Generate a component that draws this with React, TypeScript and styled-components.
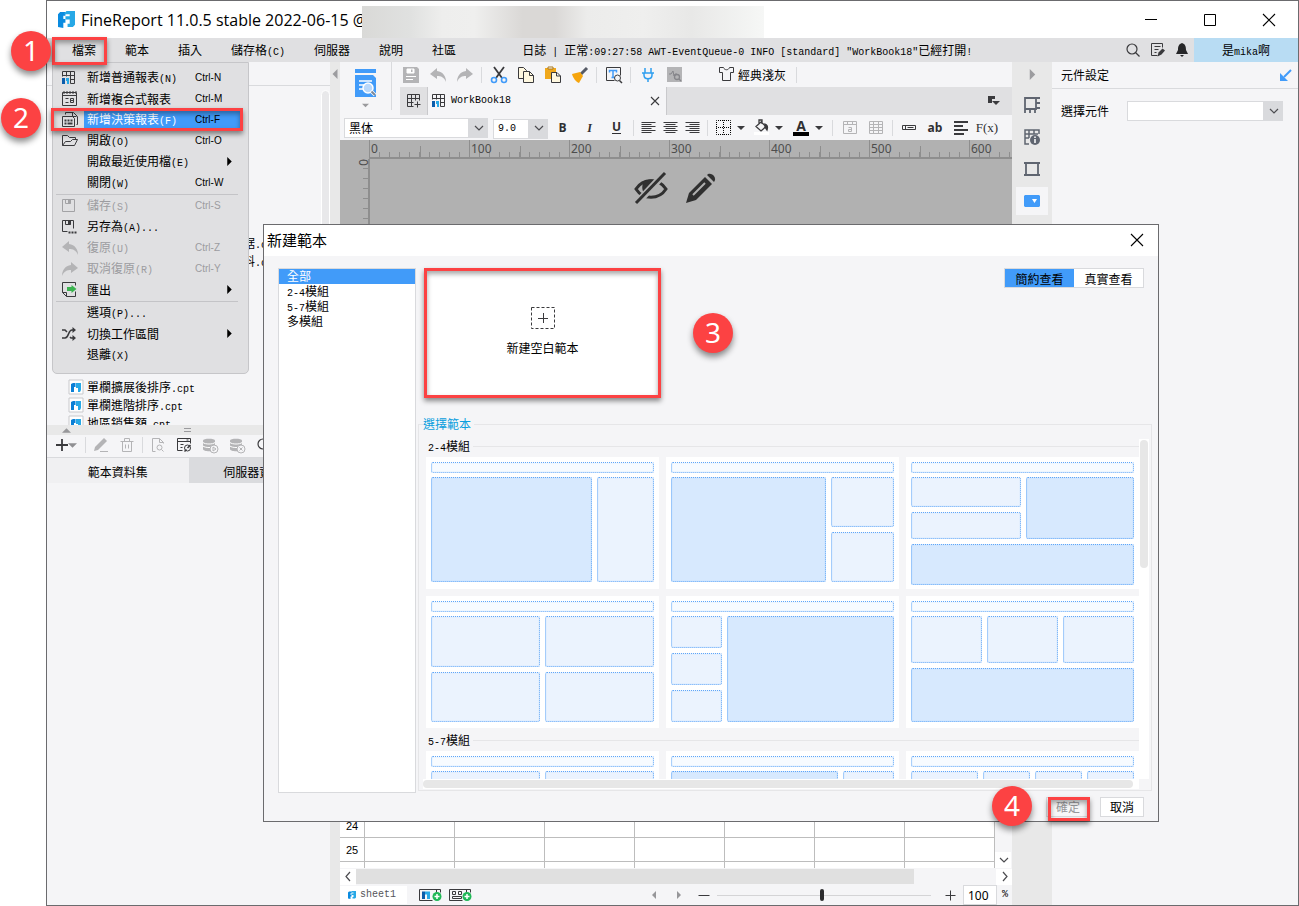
import React from "react";
import styled, { createGlobalStyle, css } from "styled-components";

const CJK = '"Noto Sans CJK TC", sans-serif';
const MONO = '"Liberation Mono", "Noto Sans CJK TC", monospace';
const blue = "#419bf9";
const panel = "#f5f5f7";
const bar = "#e0e0e2";
const line = "#d9dadd";
const ink = "#3a3a3d";
const faint = "#b4b4b6";

const Global = createGlobalStyle`
  * { box-sizing: border-box; }
  body { margin: 0; background: #fff; color: #000; font: 12px/16px ${CJK}; }
  button, input, select { font: inherit; color: inherit; margin: 0; padding: 0; border: 0; background: none; border-radius: 0; outline: none; }
  ul { list-style: none; margin: 0; padding: 0; }
  svg { display: block; flex: none; overflow: visible; }
`;

/* ---------- shared parts ---------- */

const Lat = styled.span`
  font: 10px/12px ${MONO};
  white-space: pre;
`;

const Mixed = ({ text }: { text: string }) => (
  <>
    {text.split(/([\x20-\x7e]+)/).map((part, i) =>
      /^[\x20-\x7e]+$/.test(part) ? <Lat key={i}>{part}</Lat> : part
    )}
  </>
);

const Badge = styled.span<{ $x: number; $y: number }>`
  position: absolute;
  left: ${(p) => p.$x}px;
  top: ${(p) => p.$y}px;
  z-index: 5;
  width: 40px;
  height: 40px;
  border-radius: 50%;
  background: #fc4243;
  color: #fff;
  font: 28px/38px "Noto Sans", sans-serif;
  text-align: center;
  box-shadow: 0 4px 6px rgba(0, 0, 0, 0.45);
  pointer-events: none;
`;

const Frame = styled.span<{ $inset: string }>`
  position: absolute;
  inset: ${(p) => p.$inset};
  z-index: 4;
  border: 3px solid #fc4243;
  box-shadow: 0 3px 5px rgba(0, 0, 0, 0.45), inset 0 3px 5px rgba(0, 0, 0, 0.35);
  pointer-events: none;
`;

type IconProps = {
  size?: number;
  w?: number;
  h?: number;
  color?: string;
  crisp?: boolean;
  children: React.ReactNode;
};

/* crisp icons centre their one-pixel strokes on the pixel grid */
const Icon = ({ size = 16, w = size, h = size, color = ink, crisp, children }: IconProps) => (
  <svg
    width={w}
    height={h}
    viewBox={crisp ? `-0.5 -0.5 ${w} ${h}` : `0 0 ${w} ${h}`}
    fill="none"
    stroke={color}
    strokeWidth={crisp ? 1 : 1.3}
    aria-hidden="true"
  >
    {children}
  </svg>
);

/* ---------- icons ---------- */

const Logo = ({ size = 16 }: { size?: number }) => (
  <svg width={size} height={size} viewBox="0 0 16 16" aria-hidden="true">
    <path d="M0 3 2 1H7V4.500H5V7.500H7V11H5V16L0 15Z" fill="#0a8be0" />
    <path d="M6 2 8 0H16V13L14 15H9V12H11V8H7V5H11V3H6Z" fill="#27a8e6" />
  </svg>
);
const GridReport = () => (
  <Icon size={14} crisp>
    <path d="M0 5V0H12V12H8M0 4H12M4 0V5M8 0V12M8 8H12" />
    <path d="M-0.500 6.500H2.500V12.500H-0.500Z" fill="#0b5cab" stroke="none" />
    <path d="M3.500 6.500H6.500V12.500H4.500V9.500H3.500Z" fill="#27a8e6" stroke="none" />
  </Icon>
);
const GridPlus = () => (
  <Icon size={14} crisp>
    <path d="M6 12H0V0H12V6M0 4H12M0 8H6M4 0V12M8 0V6M10 7V13M7 10H13" />
  </Icon>
);
const MultiReport = () => (
  <Icon size={15} crisp>
    <path d="M0 1H14V14H0ZM0 4H14M3 7H6M3 11H6M8 7H11V9H8ZM8 9H11V11H8Z" />
    <path d="M1 0H14M1 2H14" strokeDasharray="1 2" />
  </Icon>
);
const Dashboard = () => (
  <Icon size={16} crisp>
    <path d="M3 2V0H11L15 4V12H14M10 0V4H14M0 4H10L12 6V14H0Z" />
    <path d="M2 8H4M5 8H7M8 8H10M2 11H4M5 11H10" strokeWidth="2" />
  </Icon>
);
const Folder = () => (
  <Icon size={16} crisp>
    <path d="M0 12V2H5L7 4H13V6M0 12 3 8 8 8 10 6H15L12 12Z" />
  </Icon>
);
const Floppy = ({ color = ink, dots = false }: { color?: string; dots?: boolean }) => (
  <Icon size={14} color={color} crisp>
    <path d={dots ? "M5 11H0V0H11V8" : "M0 0H12V12H0Z"} />
    <path d="M3 0V4H8V0" />
    <path d="M5.500 0H8.500V4H5.500Z" fill={color} stroke="none" />
    {dots && <path d="M6 12H8M9 12H11M12 12H14" strokeWidth="2" />}
  </Icon>
);
const Undo = () => (
  <Icon size={16}>
    <path d="M7 1 0 7 7 12V9C11 9 14 10 16 15 16 9 13 5 7 4Z" fill={faint} stroke="none" />
  </Icon>
);
const Redo = () => (
  <Icon size={16}>
    <path d="M9 1 16 7 9 12V9C5 9 2 10 0 15 0 9 3 5 9 4Z" fill={faint} stroke="none" />
  </Icon>
);
const Export = () => (
  <Icon size={15} crisp>
    <path d="M0 10V0H13V3M13 9V14H4L0 10H4V14" />
    <path d="M4.500 4.500H9V2.500L14 6.500 9 10.500V8.500H4.500Z" fill="#3bb34f" stroke="none" />
  </Icon>
);
const Shuffle = () => (
  <Icon size={14}>
    <path d="M0 3H3L5 5M8 10 9 11H12M0 11H3C7 11 6 3 10 3H12" strokeWidth="1.600" />
    <path d="M10.500 0 14 3 10.500 6ZM10.500 8 14 11 10.500 14Z" fill={ink} stroke="none" />
  </Icon>
);
const SaveAll = () => (
  <Icon size={16}>
    <path d="M0 0H14L16 2V16H0Z" fill={faint} stroke="none" />
    <path d="M4 2H11V6H4ZM3 9.500H13M3 12.500H10" stroke="#fff" fill="#fff" strokeWidth="1" />
    <path d="M8 2.500H9.500V5H8Z" fill={faint} stroke="none" />
  </Icon>
);
const Scissors = () => (
  <Icon size={16}>
    <path d="M3 0 11 11M13 0 5 11" strokeWidth="1.800" />
    <circle cx="3" cy="13" r="2.500" stroke={blue} strokeWidth="1.600" />
    <circle cx="13" cy="13" r="2.500" stroke={blue} strokeWidth="1.600" />
  </Icon>
);
const Copy = () => (
  <Icon size={16} crisp>
    <path d="M0 0H5L8 3V11H0Z" fill="#fff8e0" />
    <path d="M5 4H11L15 8V15H5Z" fill="#fff8e0" />
    <path d="M11 4V8H15" />
  </Icon>
);
const Paste = () => (
  <Icon size={16}>
    <path d="M0 1H11V12H0Z" fill="#f0a81c" stroke="none" />
    <path d="M3 0H8V2H3Z" fill="#fff" stroke="#a8761a" strokeWidth="1" />
    <path d="M6.500 5.500H12L15.500 9V15.500H6.500ZM11.500 5.500V9H15.500" fill="#fff8e0" strokeWidth="1" />
  </Icon>
);
const Brush = () => (
  <Icon size={16}>
    <path d="M15 1 9 7" stroke="#565a66" strokeWidth="3" />
    <path d="M0 7 8 5 11 9 7 16C4 15 1 11 0 7Z" fill="#f6a50d" stroke="none" />
  </Icon>
);
const TextSearch = () => (
  <Icon size={16} crisp>
    <path d="M8 13H0V0H14V8" />
    <path d="M3 5V3H10V5M6.500 3V10M5 10H8" stroke={blue} strokeWidth="1.500" />
    <circle cx="11" cy="10.500" r="3" fill={panel} />
    <path d="M13 13 15.500 15.500" strokeWidth="1.500" />
  </Icon>
);
const Plug = () => (
  <Icon size={14} color="#2f9ff0">
    <path d="M4 0V5M10 0V5M1 5H13M3 5V7C3 12 11 12 11 7V5M7 11V14" strokeWidth="1.500" />
  </Icon>
);
const ChartSearch = () => (
  <Icon size={15}>
    <path d="M0 0H15V15H0Z" fill={faint} stroke="none" />
    <path d="M2 7H4L6 4 7 9 8 7H10" stroke="#85858a" strokeWidth="1" />
    <circle cx="10" cy="10" r="2.500" stroke="#85858a" />
    <path d="M12 12 14 14" stroke="#85858a" />
  </Icon>
);
const Shirt = () => (
  <Icon size={15} crisp>
    <path d="M4 0H0V5H3V13H11V5H14V0H10C9 3 5 3 4 0Z" />
  </Icon>
);
const Lens = ({ size = 14 }: { size?: number }) => (
  <Icon size={size}>
    <circle cx="6" cy="6" r="5" strokeWidth="1.200" />
    <path d="M9.500 9.500 13.500 13.500" strokeWidth="1.200" />
  </Icon>
);
const NotePen = () => (
  <Icon size={14} crisp>
    <path d="M11 4V0H0V12H6M3 3H9M3 6H7M3 9H5" />
    <path d="M6 13 7 9 11 5 13.500 7 10 11Z" fill={ink} stroke="none" />
  </Icon>
);
const Bell = () => (
  <Icon w={12} h={14}>
    <path d="M6 0C9 1 10 3 10 7L12 11H0L2 7C2 3 3 1 6 0ZM4 12H8L6 14Z" fill="#262628" stroke="none" />
  </Icon>
);
const Caret = ({ dir = "down", size = 7, color = ink }: { dir?: "down" | "up" | "left" | "right"; size?: number; color?: string }) => {
  const paths = { down: "M0 2H8L4 6Z", up: "M0 6H8L4 2Z", left: "M6 0V8L2 4Z", right: "M2 0V8L6 4Z" };
  return (
    <svg width={size} height={size} viewBox="0 0 8 8" aria-hidden="true">
      <path d={paths[dir]} fill={color} />
    </svg>
  );
};
const Chevron = ({ d = "M1 2 5 6 9 2" }: { d?: string }) => (
  <Icon size={9} color="#4c4c50">
    <path d={d} strokeWidth="1.200" />
  </Icon>
);
const Cross = ({ size = 12, color = "#000" }: { size?: number; color?: string }) => (
  <Icon size={size} color={color}>
    <path d={`M0 0 ${size} ${size}M${size} 0 0 ${size}`} strokeWidth="1.100" />
  </Icon>
);
const Lines = ({ ends }: { ends: [number, number][] }) => (
  <Icon w={14} h={11} crisp>
    {ends.map(([a, b], i) => (
      <path key={i} d={`M${a} ${i * 2}H${b}`} />
    ))}
  </Icon>
);
const BigPreview = () => (
  <Icon w={21} h={28}>
    <path d="M0 0H21V4H0ZM0 6H18L21 9V28H0Z" fill={blue} stroke="none" />
    <path d="M4 12H17M4 16H9M4 20H8" stroke="#fff" strokeWidth="1.600" />
    <circle cx="13" cy="19" r="5" fill="#b9d8fb" stroke="#fff" strokeWidth="1.500" />
    <path d="M16.500 22.500 20 26" stroke="#fff" strokeWidth="3.500" />
    <path d="M16.500 22.500 20 26" stroke="#7d8796" strokeWidth="2" />
  </Icon>
);
const FileMark = () => (
  <Icon size={14}>
    <path d="M0 0H14V14H0Z" fill="#fff" stroke="#c9c9cc" strokeWidth="1" />
    <path d="M2 4 4 3H6.500V7H5V12H2Z" fill="#0a7fd6" stroke="none" />
    <path d="M7 3H12V10L11 12H9V8H7Z" fill="#27a8e6" stroke="none" />
  </Icon>
);
const Database = ({ mark }: { mark: string }) => (
  <Icon size={15} color={faint}>
    <path d="M0 2.500C0 0 12 0 12 2.500V11C12 14 0 14 0 11Z" fill={faint} stroke="none" />
    <path d="M0 4.500C2 6.500 10 6.500 12 4.500M0 8C2 10 10 10 12 8" stroke="#fff" strokeWidth="1" />
    <circle cx="11" cy="11" r="4" fill={panel} strokeWidth="1" />
    <path d={mark} strokeWidth="1" />
  </Icon>
);

/* ---------- window frame ---------- */

const Page = styled.div`
  padding-left: 46px;
  min-height: 100vh;
  display: flex;
`;
const Window = styled.div`
  position: relative;
  flex: 1;
  min-width: 0;
  display: flex;
  flex-direction: column;
  border: 1px solid #6b6b6e;
  background: ${panel};
`;
const TitleBar = styled.header`
  height: 37px;
  display: flex;
  align-items: center;
  background: #fff;
  padding-left: 11px;
`;
const Title = styled.h1`
  margin: 0 0 0 6px;
  font: 16px/20px "Open Sans", sans-serif;
  white-space: nowrap;
  width: 281px;
`;
const Masked = styled.div`
  width: 402px;
  height: 32px;
  margin-top: 5px;
  z-index: 1;
  background: linear-gradient(90deg, #d9d9d7, #e0e1e0 12%, #eeeeed 20%, #efefee 28%, #dad8d6 40%, #dad8d6 48%, #ececeb 56%, #efefee 70%, #e8e8e7 82%, #f6f7f6);
`;
const WindowButton = styled.button`
  width: 59px;
  height: 36px;
  display: flex;
  align-items: center;
  justify-content: center;
`;
const Spacer = styled.div`
  flex: 1;
`;

/* ---------- menu bar ---------- */

const MenuBar = styled.nav`
  position: relative;
  z-index: 3;
  height: 24px;
  display: flex;
  align-items: center;
  background: ${bar};
  padding-left: 11px;
`;
const MenuTitle = styled.button`
  position: relative;
  height: 24px;
  padding: 0 14px;
  margin-right: 1px;
  line-height: 22px;
  white-space: nowrap;
`;
const LogLine = styled.p`
  margin: 0 0 0 51px;
  white-space: pre;
`;
const Tools = styled.div`
  display: flex;
  align-items: center;
  gap: 11px;
  margin-right: 6px;
`;
const PlainButton = styled.button`
  display: flex;
  align-items: center;
  justify-content: center;
`;
const User = styled.button`
  width: 104px;
  height: 24px;
  background: #b8dcf3;
`;
const Dropdown = styled.div`
  position: absolute;
  left: 5px;
  top: 24px;
  width: 197px;
  padding: 4px 8px 8px 9px;
  background: ${bar};
  border: 1px solid #c6c6c9;
  border-radius: 0 0 5px 5px;
`;
const MenuRow = styled.button<{ $off?: boolean }>`
  position: relative;
  width: 100%;
  height: 21px;
  display: flex;
  align-items: center;
  text-align: left;
  white-space: nowrap;
  ${(p) => p.$off && css`color: #9c9ca0;`}
`;
const RowIcon = styled.span`
  width: 22px;
  display: flex;
`;
const RowLabel = styled.span<{ $on?: boolean }>`
  flex: 1;
  height: 17px;
  padding-left: 3px;
  display: flex;
  align-items: center;
  ${(p) => p.$on && css`background: ${blue};`}
`;
const RowName = styled.span<{ $on?: boolean }>`
  width: 108px;
  ${(p) => p.$on && css`color: #fff;`}
`;
const Shortcut = styled.span`
  width: 30px;
  font: 10px/12px "Liberation Sans", sans-serif;
`;
const MenuRule = styled.div`
  height: 1px;
  margin: 1px 2px 0 -6px;
  background: #c4c4c7;
`;

type Entry = { name: string; key?: string; icon?: React.ReactNode; off?: boolean; on?: boolean; sub?: boolean };
const fileMenu: Entry[][] = [
  [
    { name: "新增普通報表(N)", key: "Ctrl-N", icon: <GridReport /> },
    { name: "新增複合式報表", key: "Ctrl-M", icon: <MultiReport /> },
    { name: "新增決策報表(F)", key: "Ctrl-F", icon: <Dashboard />, on: true },
    { name: "開啟(O)", key: "Ctrl-O", icon: <Folder /> },
    { name: "開啟最近使用檔(E)", sub: true },
    { name: "關閉(W)", key: "Ctrl-W" },
  ],
  [
    { name: "儲存(S)", key: "Ctrl-S", icon: <Floppy color="#a2a2a5" />, off: true },
    { name: "另存為(A)...", icon: <Floppy dots /> },
    { name: "復原(U)", key: "Ctrl-Z", icon: <Undo />, off: true },
    { name: "取消復原(R)", key: "Ctrl-Y", icon: <Redo />, off: true },
    { name: "匯出", icon: <Export />, sub: true },
  ],
  [{ name: "選項(P)..." }, { name: "切換工作區間", icon: <Shuffle />, sub: true }, { name: "退離(X)" }],
];

const FileMenu = () => (
  <Dropdown>
    {fileMenu.map((group, g) => (
      <React.Fragment key={g}>
        {g > 0 && <MenuRule />}
        {group.map((e) => (
          <MenuRow key={e.name} $off={e.off}>
            <RowIcon>{e.icon}</RowIcon>
            <RowLabel $on={e.on}>
              <RowName $on={e.on}>
                <Mixed text={e.name} />
              </RowName>
              <Shortcut>{e.key}</Shortcut>
              {e.sub && <Caret dir="right" size={9} color="#000" />}
            </RowLabel>
            {e.on && (
              <>
                <Frame $inset="-1px -3px -1px -11px" />
                <Badge $x={-61} $y={-11}>2</Badge>
              </>
            )}
          </MenuRow>
        ))}
      </React.Fragment>
    ))}
  </Dropdown>
);

/* ---------- left pane ---------- */

const Body = styled.div`
  flex: 1;
  display: flex;
  min-height: 0;
`;
const LeftPane = styled.aside`
  width: 283px;
  flex: none;
`;
const PaneHead = styled.div`
  height: 24px;
  border-bottom: 1px solid ${line};
`;
const Tree = styled.div`
  height: 339px;
  overflow: hidden;
  display: flex;
  justify-content: space-between;
`;
const TreeList = styled.ul`
  padding-top: 4px;
`;
const TreeRow = styled.li<{ $indent: number }>`
  height: 18px;
  padding-left: ${(p) => p.$indent}px;
  display: flex;
  align-items: center;
  white-space: nowrap;
  gap: 4px;
`;
const TreeTrack = styled.div`
  width: 9px;
  margin-top: 4px;
  background: #e8e8ea;
  border: 1px solid #fff;
  border-radius: 5px 5px 0 0;
`;
const SplitBar = styled.div`
  height: 10px;
  display: flex;
  align-items: center;
  gap: 113px;
  padding-left: 15px;
  background: #e8e8e8;
`;
const SplitGrip = styled.div`
  width: 7px;
  height: 4px;
  border: solid #9a9a9d;
  border-width: 1px 0;
`;
const DataTools = styled.div`
  height: 23px;
  display: flex;
  align-items: center;
  gap: 12px;
  padding: 0 0 2px 9px;
  border-bottom: 1px solid ${line};
  overflow: hidden;
`;
const Rule = styled.span<{ $m?: number; $h?: number }>`
  width: 1px;
  height: ${(p) => p.$h ?? 16}px;
  margin: 0 ${(p) => p.$m ?? 0}px;
  background: ${line};
  flex: none;
`;
const DataTabs = styled.div`
  height: 25px;
  display: grid;
  grid-template-columns: 1fr 1fr;
`;
const DataTab = styled.button<{ $on?: boolean }>`
  padding-top: 2px;
  background: ${(p) => (p.$on ? "#f0f0f2" : "#dadbde")};
`;

const treeRows: { text: string; indent: number }[] = [
  ...Array.from({ length: 8 }, () => ({ text: "", indent: 0 })),
  { text: "据.cpt", indent: 196 },
  { text: "料.cpt", indent: 196 },
  ...Array.from({ length: 6 }, () => ({ text: "", indent: 0 })),
  { text: "單欄擴展後排序.cpt", indent: 22 },
  { text: "單欄進階排序.cpt", indent: 22 },
  { text: "地區銷售額.cpt", indent: 22 },
];

const Left = () => (
  <LeftPane>
    <PaneHead />
    <Tree>
      <TreeList>
        {treeRows.map((r, i) => (
          <TreeRow key={i} $indent={r.indent}>
            {r.indent === 22 && <FileMark />}
            <span>
              <Mixed text={r.text} />
            </span>
          </TreeRow>
        ))}
      </TreeList>
      <TreeTrack />
    </Tree>
    <SplitBar>
      <Caret dir="up" size={9} color="#97979a" />
      <SplitGrip />
    </SplitBar>
    <DataTools>
      <PlainButton aria-label="add">
        <Icon size={12}>
          <path d="M0 6H12M6 0V12" strokeWidth="1.800" />
        </Icon>
        <Caret size={9} color="#8f8f92" />
      </PlainButton>
      <Rule $m={-4} />
      <PlainButton aria-label="edit">
        <Icon size={14}>
          <path d="M0 13 1 9 10 0 13 3 4 12Z" fill={faint} stroke="none" />
          <path d="M6 13.500H14" stroke={faint} strokeWidth="1" />
        </Icon>
      </PlainButton>
      <PlainButton aria-label="delete">
        <Icon size={14} color={faint} crisp>
          <path d="M0 3H13M4 3V0H9V3M2 3V13H11V3M5 6V10M8 6V10" />
        </Icon>
      </PlainButton>
      <Rule $m={-4} />
      <PlainButton aria-label="preview">
        <Icon size={14} color={faint} crisp>
          <path d="M4 13H1V0H8L12 4V5M8 0V4H12" />
          <circle cx="8" cy="9" r="2.500" />
          <path d="M10 11 12 13" />
        </Icon>
      </PlainButton>
      <PlainButton aria-label="manage">
        <Icon size={14} crisp>
          <path d="M5 12H0V0H13V5M0 3H13M3 6H6M3 9H5M9 1.500H11" />
          <circle cx="10" cy="9.500" r="3" />
          <path d="M10 9.500 13 6.500M7 13 9 11" strokeWidth="1.500" />
        </Icon>
      </PlainButton>
      <PlainButton aria-label="run">
        <Database mark="M10 9 13 11 10 13Z" />
      </PlainButton>
      <PlainButton aria-label="clear">
        <Database mark="M9.500 9.500 12.500 12.500M12.500 9.500 9.500 12.500" />
      </PlainButton>
      <PlainButton aria-label="search">
        <Lens />
      </PlainButton>
    </DataTools>
    <DataTabs>
      <DataTab $on>範本資料集</DataTab>
      <DataTab>伺服器資料集</DataTab>
    </DataTabs>
  </LeftPane>
);

/* ---------- centre ---------- */

const Gutter = styled.div`
  width: 10px;
  flex: none;
  padding-top: 7px;
  background: #e8e8e8;
`;
const Center = styled.main`
  flex: 1;
  min-width: 0;
  display: flex;
  flex-direction: column;
`;
const TopTools = styled.div`
  display: flex;
  height: 53px;
`;
const PreviewSlot = styled.button`
  width: 51px;
  display: flex;
  flex-direction: column;
  align-items: center;
  padding-top: 7px;
  gap: 5px;
`;
const TopRight = styled.div`
  flex: 1;
  min-width: 0;
`;
const ToolRow = styled.div`
  height: 25px;
  padding-left: 5px;
  display: flex;
  align-items: center;
`;
const ToolButton = styled.button<{ $w?: number }>`
  width: ${(p) => p.$w ?? 27}px;
  height: 22px;
  flex: none;
  display: flex;
  align-items: center;
  justify-content: center;
  gap: 6px;
`;
const ThemeButton = styled.button`
  display: flex;
  align-items: center;
  gap: 4px;
  margin: 0 10px 0 31px;
`;
const TabRow = styled.div`
  height: 28px;
  margin-left: 8px;
  display: flex;
  align-items: center;
  background: ${bar};
`;
const DocTab = styled.div`
  width: 240px;
  height: 28px;
  padding: 0 7px 0 4px;
  display: flex;
  align-items: center;
  gap: 5px;
  background: ${panel};
  border: solid #c9c9cc;
  border-width: 0 1px;
`;
const FormatRow = styled.div`
  height: 25px;
  padding-left: 4px;
  display: flex;
  align-items: center;
`;
const ComboBox = styled.span<{ $w: number }>`
  position: relative;
  width: ${(p) => p.$w}px;
  height: 20px;
  flex: none;
  margin-right: 5px;
  svg {
    position: absolute;
    right: 5px;
    top: 6px;
    pointer-events: none;
  }
  & + button { margin-left: -4px; }
`;
const Select = styled.select<{ $mono?: boolean }>`
  appearance: none;
  width: 100%;
  height: 100%;
  padding-left: 4px;
  border: 1px solid ${line};
  background: linear-gradient(${line}, ${line}) right / 19px 100% no-repeat #fff;
  ${(p) => p.$mono && css`font: 10px/16px ${MONO};`}
`;
const Glyph = styled.span<{ $style?: "bold" | "italic" | "under" | "mark" }>`
  font: bold 12px/14px "Open Sans", sans-serif;
  color: #2f2f32;
  ${(p) => p.$style === "italic" && css`font: italic bold 12px/14px "Liberation Serif", serif;`}
  ${(p) => p.$style === "under" && css`border-bottom: 1px solid #2f2f32; line-height: 12px;`}
  ${(p) => p.$style === "mark" && css`border-bottom: 4px solid #000; line-height: 13px; font-size: 14px; padding: 0 3px;`}
`;
const Formula = styled.span`
  font: 13px/14px "Liberation Serif", serif;
  color: #2f2f32;
`;

const Canvas = styled.section`
  flex: 1;
  display: flex;
  flex-direction: column;
  background: #b1b1b1;
`;
const Ruler = styled.div`
  height: 19px;
  margin-left: 29px;
  display: flex;
  overflow: hidden;
  border-bottom: 2px solid #8e8e8e;
`;
const RulerMark = styled.span`
  flex: none;
  width: 100px;
  height: 17px;
  padding-left: 1px;
  color: #4d4d4d;
  font: 12px/17px "Noto Sans", sans-serif;
  background: linear-gradient(#8e8e8e, #8e8e8e) 50px 100% / 1px 11px no-repeat,
    repeating-linear-gradient(90deg, transparent 0 9px, #8e8e8e 9px 10px) 0 100% / 100% 5px no-repeat;
  border-left: 1px solid #8e8e8e;
`;
const Work = styled.div`
  flex: 1;
  display: flex;
`;
const SideRuler = styled.div`
  width: 12px;
  margin-left: 18px;
  border-right: 2px solid #8e8e8e;
  background: repeating-linear-gradient(180deg, transparent 0 9px, #8e8e8e 9px 10px) 100% 0 / 5px 100% no-repeat;
  color: #4d4d4d;
  font: 12px/10px "Noto Sans", sans-serif;
  writing-mode: vertical-rl;
`;
const WorkIcons = styled.div`
  flex: 1;
  display: flex;
  justify-content: center;
  gap: 18px;
  padding: 13px 30px 0 0;
`;
const SheetArea = styled.div`
  display: flex;
  height: 54px;
`;
const SheetClip = styled.div`
  flex: 1;
  min-width: 0;
  overflow: hidden;
  background: #fff;
`;
const SheetTable = styled.table`
  table-layout: fixed;
  width: 655px;
  border-collapse: separate;
  border-spacing: 0;
  th, td {
    width: 90px;
    height: 24px;
    padding: 0;
    border: solid #bdbdbd;
    border-width: 0 1px 1px 0;
    font: 11px/22px "Liberation Sans", sans-serif;
    text-align: center;
  }
  th { width: 25px; }
`;
const VTrack = styled.div`
  width: 17px;
  display: flex;
  flex-direction: column;
  justify-content: flex-end;
`;
const ArrowButton = styled.button`
  width: 16px;
  height: 16px;
  display: flex;
  align-items: center;
  justify-content: center;
  background: #fff;
  flex: none;
`;
const HTrack = styled.div`
  height: 17px;
  display: flex;
  align-items: center;
  justify-content: space-between;
  background: ${panel};
`;
const HThumb = styled.div`
  flex: 1;
  height: 15px;
  margin-right: 82px;
  background: #e0e0e0;
`;
const StatusRow = styled.div`
  height: 20px;
  display: flex;
  align-items: center;
`;
const SheetTab = styled.button`
  width: 67px;
  height: 18px;
  margin-right: 12px;
  display: flex;
  align-items: center;
  gap: 4px;
  padding-left: 8px;
  background: #fff;
  color: #55555a;
`;
const AddButtons = styled.div`
  display: flex;
  gap: 8px;
`;
const Range = styled.input`
  appearance: none;
  width: 214px;
  height: 14px;
  margin: 0 14px 0 1px;
  background: linear-gradient(#d4d4d6, #d4d4d6) center / 100% 1px no-repeat;
  &::-webkit-slider-thumb {
    appearance: none;
    width: 4px;
    height: 12px;
    border-radius: 2px;
    background: #2c2c2e;
  }
`;
const ZoomBox = styled.input`
  width: 34px;
  height: 20px;
  margin: 0 5px 0 7px;
  padding-left: 4px;
  border: 1px solid ${line};
  background: #fff;
  font: 12px/18px "Noto Sans", sans-serif;
`;
const Percent = styled(Lat)`
  margin-right: 4px;
`;

const AddSheet = ({ grid }: { grid?: boolean }) => (
  <Icon w={22} h={14} crisp>
    <path d="M13 12H0V1H21V4M17 1V4" />
    {grid ? (
      <path d="M3 3H6V6H3ZM9 3H12V6H9ZM3 8H12V10H3Z" />
    ) : (
      <>
        <path d="M2.500 3H5.500V10.500H2.500Z" fill="#0b5cab" stroke="none" />
        <path d="M5.500 3H10.500V10.500H7.500V6H5.500Z" fill="#27a8e6" stroke="none" />
      </>
    )}
    <circle cx="17.500" cy="8" r="4.500" fill="#1fb856" stroke="none" />
    <path d="M17.500 5.500V10.500M15 8H20" stroke="#fff" strokeWidth="1.500" />
  </Icon>
);

const Middle = () => (
  <Center>
    <TopTools>
      <PreviewSlot aria-label="preview report">
        <BigPreview />
        <Caret size={7} color="#9a9a9d" />
      </PreviewSlot>
      <Rule $h={48} />
      <TopRight>
        <ToolRow>
          <ToolButton aria-label="save"><SaveAll /></ToolButton>
          <ToolButton aria-label="undo"><Undo /></ToolButton>
          <ToolButton aria-label="redo"><Redo /></ToolButton>
          <Rule $m={3} />
          <ToolButton aria-label="cut"><Scissors /></ToolButton>
          <ToolButton aria-label="copy"><Copy /></ToolButton>
          <ToolButton aria-label="paste"><Paste /></ToolButton>
          <ToolButton aria-label="format"><Brush /></ToolButton>
          <Rule $m={3} />
          <ToolButton aria-label="find"><TextSearch /></ToolButton>
          <Rule $m={3} />
          <ToolButton aria-label="connect"><Plug /></ToolButton>
          <ToolButton aria-label="analyse"><ChartSearch /></ToolButton>
          <ThemeButton>
            <Shirt />
            經典淺灰
          </ThemeButton>
          <Rule />
        </ToolRow>
        <TabRow>
          <ToolButton aria-label="new sheet"><GridPlus /></ToolButton>
          <DocTab>
            <GridReport />
            <Lat>WorkBook18</Lat>
            <Spacer />
            <PlainButton aria-label="close tab"><Cross size={8} color={ink} /></PlainButton>
          </DocTab>
          <Spacer />
          <ToolButton $w={36} aria-label="tab list">
            <Icon size={12}>
              <path d="M0 1H7V4H4V8H0Z" fill={ink} stroke="none" />
              <path d="M4 6H12L8 10Z" fill={ink} stroke="none" />
            </Icon>
          </ToolButton>
        </TabRow>
      </TopRight>
    </TopTools>
    <FormatRow>
      <ComboBox $w={144}>
        <Select aria-label="font"><option>黑体</option></Select>
        <Chevron />
      </ComboBox>
      <ComboBox $w={55}>
        <Select $mono aria-label="font size"><option>9.0</option></Select>
        <Chevron />
      </ComboBox>
      <ToolButton><Glyph>B</Glyph></ToolButton>
      <ToolButton><Glyph $style="italic">I</Glyph></ToolButton>
      <ToolButton><Glyph $style="under">U</Glyph></ToolButton>
      <Rule $m={3} />
      <ToolButton $w={22} aria-label="left"><Lines ends={[[0, 14], [0, 10], [0, 14], [0, 10], [0, 14], [0, 10]]} /></ToolButton>
      <ToolButton $w={22} aria-label="center"><Lines ends={[[0, 14], [2, 12], [0, 14], [2, 12], [0, 14], [2, 12]]} /></ToolButton>
      <ToolButton $w={22} aria-label="right"><Lines ends={[[0, 14], [4, 14], [0, 14], [4, 14], [0, 14], [4, 14]]} /></ToolButton>
      <Rule $m={4} />
      <ToolButton $w={36} aria-label="borders">
        <Icon size={15} crisp>
          <path d="M0 0H14V14H0ZM7 0V14M0 7H14" stroke="#000" strokeDasharray="1 1" strokeDashoffset="0.500" />
        </Icon>
        <Caret size={8} />
      </ToolButton>
      <ToolButton $w={40} aria-label="fill">
        <Icon size={15}>
          <path d="M0 12H15V15H0Z" fill="#fff" stroke="none" />
          <path d="M5 4V0H8V4M2 6.500 7 2 12 6.500 7 11Z" />
          <path d="M11 4C14 5 14 7 13 10L11 7Z" fill={ink} />
        </Icon>
        <Caret size={8} />
      </ToolButton>
      <ToolButton $w={40} aria-label="text colour">
        <Glyph $style="mark">A</Glyph>
        <Caret size={8} />
      </ToolButton>
      <Rule $m={4} />
      <ToolButton $w={26} aria-label="merge">
        <Icon size={14} color={faint} crisp>
          <path d="M0 0H13V12H0ZM4 0V3M9 0V3M0 3H13" />
          <path d="M5 6H8V10H5V8H8" />
        </Icon>
      </ToolButton>
      <ToolButton $w={26} aria-label="cells">
        <Icon size={14} color={faint} crisp>
          <path d="M0 0H13V12H0ZM0 3H13M0 6H13M0 9H13M4 0V12M9 0V12" />
        </Icon>
      </ToolButton>
      <Rule $m={3} />
      <ToolButton $w={26} aria-label="widget">
        <Icon w={14} h={5} crisp><path d="M0 0H13V4H0ZM3 0V4M5 2H11" /></Icon>
      </ToolButton>
      <ToolButton $w={26}><Glyph>ab</Glyph></ToolButton>
      <ToolButton $w={26} aria-label="paragraph">
        <Icon size={14}><path d="M0 1H14M0 5H9M0 9H14M0 13H10" strokeWidth="1.800" /></Icon>
      </ToolButton>
      <ToolButton $w={26}><Formula>F(x)</Formula></ToolButton>
    </FormatRow>
    <Canvas>
      <Ruler>
        {[0, 100, 200, 300, 400, 500, 600].map((n) => (
          <RulerMark key={n}>{n}</RulerMark>
        ))}
      </Ruler>
      <Work>
        <SideRuler>0</SideRuler>
        <WorkIcons>
          <Icon size={32} color="#303030">
            <path d="M1 17C8 6 24 6 31 17 24 28 8 28 1 17Z" strokeWidth="3" />
            <path d="M9 9C13 7 19 7 23 9L11 24C7 20 6 14 9 9Z" fill="#303030" stroke="none" />
            <path d="M30 1 2 31" stroke="#b1b1b1" strokeWidth="7" />
            <path d="M30 1 1 31" strokeWidth="3" />
          </Icon>
          <Icon size={32} color="#303030">
            <path d="M1 31 4 21 20 5 27 12 11 28Z" fill="#303030" stroke="none" />
            <path d="M22 3C25-1 33 5 29 10Z" fill="#303030" stroke="none" />
            <path d="M8 23 20 11" stroke="#b1b1b1" strokeWidth="2" />
          </Icon>
        </WorkIcons>
      </Work>
    </Canvas>
    <SheetArea>
      <SheetClip>
        <SheetTable>
          <tbody>
            {["24", "25", ""].map((n) => (
              <tr key={n}>
                <th>{n}</th>
                {Array.from({ length: 7 }, (_, i) => <td key={i} />)}
              </tr>
            ))}
          </tbody>
        </SheetTable>
      </SheetClip>
      <VTrack>
        <ArrowButton aria-label="down"><Chevron /></ArrowButton>
      </VTrack>
    </SheetArea>
    <HTrack>
      <ArrowButton aria-label="left"><Chevron d="M6 0 2 4.500 6 9" /></ArrowButton>
      <HThumb />
      <ArrowButton aria-label="right"><Chevron d="M3 0 7 4.500 3 9" /></ArrowButton>
    </HTrack>
    <StatusRow>
      <SheetTab>
        <Logo size={8} />
        <Lat>sheet1</Lat>
      </SheetTab>
      <AddButtons>
        <PlainButton aria-label="add report sheet"><AddSheet /></PlainButton>
        <PlainButton aria-label="add grid sheet"><AddSheet grid /></PlainButton>
      </AddButtons>
      <Spacer />
      <ToolButton $w={25} aria-label="previous"><Caret dir="left" size={8} color="#97979a" /></ToolButton>
      <ToolButton $w={25} aria-label="next"><Caret dir="right" size={8} color="#97979a" /></ToolButton>
      <ToolButton $w={24} aria-label="zoom out"><Icon size={11} crisp><path d="M0 5H11" /></Icon></ToolButton>
      <Range type="range" aria-label="zoom" defaultValue={49} />
      <PlainButton aria-label="zoom in"><Icon size={11} crisp><path d="M0 5H10M5 0V10" /></Icon></PlainButton>
      <ZoomBox aria-label="zoom percent" defaultValue="100" />
      <Percent>%</Percent>
    </StatusRow>
  </Center>
);

/* ---------- right side ---------- */

const IconRail = styled.div`
  width: 40px;
  flex: none;
  display: flex;
  flex-direction: column;
  align-items: center;
  background: #e8e8e8;
`;
const RailArrow = styled.button`
  height: 25px;
  margin-bottom: 4px;
  display: flex;
  align-items: center;
`;
const RailButton = styled.button<{ $on?: boolean }>`
  width: 32px;
  height: 28px;
  margin-bottom: 4px;
  display: flex;
  align-items: center;
  justify-content: center;
  ${(p) => p.$on && css`background: ${panel};`}
`;
const RightPane = styled.aside`
  width: 246px;
  flex: none;
`;
const RightHead = styled.div`
  height: 27px;
  padding: 0 6px 0 9px;
  display: flex;
  align-items: center;
  justify-content: space-between;
  border-bottom: 1px solid ${line};
`;
const Field = styled.label`
  padding: 12px 10px 0 9px;
  display: flex;
  align-items: center;
  gap: 18px;
`;
const rail = "#5f6570";

const Right = () => (
  <>
    <IconRail>
      <RailArrow aria-label="collapse"><Caret dir="right" size={11} color="#9c9c9f" /></RailArrow>
      <RailButton aria-label="cell attributes">
        <Icon color={rail}><path d="M1 16V1H16M12 1V12H1M12 6H16M12 11H16M6 12V16M11 12V16" strokeWidth="1.800" /></Icon>
      </RailButton>
      <RailButton aria-label="cell elements">
        <Icon color={rail}>
          <path d="M5 15H1V1H15V5M1 5H14M5 1V9M10 1V5M1 9H5" strokeWidth="1.500" />
          <circle cx="11" cy="11" r="5" fill={rail} stroke="none" />
          <path d="M11 7.500V9M11 10V14" stroke="#fff" strokeWidth="1.500" />
        </Icon>
      </RailButton>
      <RailButton aria-label="floating elements">
        <Icon color={rail}>
          <path d="M2 2H14V14H2Z" strokeWidth="1.800" />
          <path d="M0 1H3V3H0ZM13 1H16V3H13ZM0 13H3V15H0ZM13 13H16V15H13Z" fill={rail} stroke="none" />
        </Icon>
      </RailButton>
      <RailButton $on aria-label="widget settings">
        <Icon w={16} h={12}>
          <path d="M1 0H15L16 1V11L15 12H1L0 11V1Z" fill={blue} stroke="none" />
          <path d="M8 4H13L10.500 8Z" fill="#fff" stroke="none" />
        </Icon>
      </RailButton>
    </IconRail>
    <RightPane>
      <RightHead>
        元件設定
        <PlainButton aria-label="dock">
          <Icon size={12} color={blue}>
            <path d="M11 1 4 8" strokeWidth="2" />
            <path d="M0 4 8 12H0Z" fill={blue} stroke="none" />
          </Icon>
        </PlainButton>
      </RightHead>
      <Field>
        選擇元件
        <ComboBox $w={156}>
          <Select><option></option></Select>
          <Chevron />
        </ComboBox>
      </Field>
    </RightPane>
  </>
);

/* ---------- dialog ---------- */

const Dialog = styled.section`
  position: absolute;
  z-index: 2;
  left: 216px;
  right: 139px;
  top: 223px;
  display: flex;
  flex-direction: column;
  border: 1px solid #6b6b6e;
  background: ${panel};
`;
const DialogTitle = styled.header`
  height: 31px;
  padding: 0 15px 1px 3px;
  display: flex;
  align-items: center;
  justify-content: space-between;
  background: #fff;
  font-size: 15px;
`;
const DialogBody = styled.div`
  display: flex;
  padding: 12px 6px 0 14px;
`;
const Groups = styled.ul`
  width: 138px;
  height: 525px;
  flex: none;
  border: 1px solid ${line};
  background: #fff;
`;
const GroupItem = styled.li<{ $on?: boolean }>`
  height: 15px;
  padding-left: 8px;
  line-height: 14px;
  ${(p) => p.$on && css`background: ${blue}; color: #fff;`}
`;
const DialogMain = styled.div`
  flex: 1;
  min-width: 0;
  margin-left: 2px;
`;
const TopLine = styled.div`
  display: flex;
  justify-content: space-between;
  align-items: flex-start;
  padding: 0 8px 0 6px;
`;
const BlankCard = styled.button`
  position: relative;
  width: 237px;
  height: 130px;
  padding-bottom: 4px;
  display: flex;
  flex-direction: column;
  align-items: center;
  justify-content: center;
  gap: 11px;
  background: #fff;
`;
const Toggle = styled.div`
  display: flex;
  border: 1px solid ${line};
`;
const ToggleButton = styled.button<{ $on?: boolean }>`
  width: 69px;
  height: 18px;
  padding-top: 2px;
  background: ${(p) => (p.$on ? blue : "#fff")};
`;
const GroupBox = styled.fieldset`
  margin: 18px 0 0;
  padding: 6px 2px 2px 4px;
  border: 1px solid #e6e6e8;
  min-width: 0;
  height: 375px;
`;
const BoxLegend = styled.legend`
  padding: 0 3px 0 0;
  color: #0a9ede;
`;
const Scroller = styled.div`
  display: flex;
  height: 341px;
`;
const Sections = styled.div`
  flex: 1;
  min-width: 0;
  overflow: hidden;
`;
const SectionName = styled.h3`
  margin: 0;
  height: 16px;
  display: flex;
  align-items: center;
  font: inherit;
  gap: 3px;
  padding-left: 2px;
  &::before, &::after {
    content: "";
    height: 1px;
    background: #e6e6e8;
  }
  &::before { width: 0; }
  &::after { flex: 1; }
`;
const Cards = styled.div`
  display: grid;
  grid-template-columns: repeat(3, 1fr);
  gap: 7px;
  padding: 3px 0 4px 3px;
`;
const Card = styled.button`
  height: 132px;
  padding: 5px;
  display: flex;
  flex-direction: column;
  gap: 4px;
  background: #fff;
`;
const Block = styled.span<{ $tone?: "head" | "dark"; $at?: string }>`
  border: 1px dotted #5fa6f8;
  border-radius: 2px;
  background: ${(p) => (p.$tone === "head" ? "#f7fbff" : p.$tone === "dark" ? "#d7e9fe" : "#ebf3fe")};
  box-shadow: inset 0 0 1px #9ccafc;
  ${(p) => p.$tone === "head" && css`width: 100%; height: 11px; flex: none;`}
  ${(p) => p.$at && css`grid-area: ${p.$at};`}
`;
const Blocks = styled.span<{ $cols: string; $rows: string }>`
  width: 100%;
  display: grid;
  gap: 5px;
  grid-template-columns: ${(p) => p.$cols};
  grid-template-rows: ${(p) => p.$rows};
`;
const VScroll = styled.div`
  width: 10px;
  margin-top: 1px;
  padding: 1px;
  background: #fff;
`;
const VThumb = styled.div`
  height: 128px;
  border-radius: 4px;
  background: #e7e7e7;
`;
const HScroll = styled.div`
  height: 10px;
  padding: 1px 6px 1px 0;
  margin-right: 10px;
  background: #fff;
`;
const HScrollThumb = styled.div`
  height: 8px;
  border-radius: 4px;
  background: #e7e7e7;
`;
const Actions = styled.footer`
  display: flex;
  justify-content: flex-end;
  gap: 10px;
  padding: 4px 14px 4px;
`;
const Action = styled.button`
  position: relative;
  width: 44px;
  height: 20px;
  border: 1px solid ${line};
  background: #fff;
  &:disabled { color: #98989b; background: #f7f7f8; }
`;

type Cell = [string, boolean?];
type Layout = { cols: string; rows: string; cells: Cell[] };
const small: Layout[] = [
  { cols: "161fr 57fr", rows: "105px", cells: [["1/1", true], ["1/2"]] },
  { cols: "155fr 63fr", rows: "50px 50px", cells: [["1/1/3/2", true], ["1/2"], ["2/2"]] },
  { cols: "110fr 108fr", rows: "30px 27px 41px", cells: [["1/1"], ["2/1"], ["1/2/3/3", true], ["3/1/4/3", true]] },
  { cols: "109fr 109fr", rows: "51px 50px", cells: [["1/1"], ["1/2"], ["2/1"], ["2/2"]] },
  { cols: "51fr 167fr", rows: "32px 32px 32px", cells: [["1/1"], ["2/1"], ["3/1"], ["1/2/4/3", true]] },
  { cols: "1fr 1fr 1fr", rows: "47px 54px", cells: [["1/1"], ["1/2"], ["1/3"], ["2/1/3/4", true]] },
];
const large: Layout[] = [
  { cols: "109fr 109fr", rows: "50px 50px", cells: [["1/1"], ["1/2"], ["2/1"], ["2/2"]] },
  { cols: "167fr 51fr", rows: "50px 50px", cells: [["1/1/3/2", true], ["1/2"], ["2/2"]] },
  { cols: "67fr 47fr 47fr 47fr", rows: "50px 50px", cells: [["1/1"], ["1/2"], ["1/3"], ["1/4"], ["2/1/3/5"]] },
];

const Thumbs = ({ name, items }: { name: string; items: Layout[] }) => (
  <>
    <SectionName>
      <span><Mixed text={name} /></span>
    </SectionName>
    <Cards>
      {items.map((t, i) => (
        <Card key={i} aria-label={`${name} ${i + 1}`}>
          <Block $tone="head" />
          <Blocks $cols={t.cols} $rows={t.rows}>
            {t.cells.map(([at, dark], k) => (
              <Block key={k} $at={at} $tone={dark ? "dark" : undefined} />
            ))}
          </Blocks>
        </Card>
      ))}
    </Cards>
  </>
);

const NewTemplate = () => (
  <Dialog role="dialog" aria-label="新建範本">
    <DialogTitle>
      新建範本
      <PlainButton aria-label="close"><Cross /></PlainButton>
    </DialogTitle>
    <DialogBody>
      <Groups>
        {["全部", "2-4模組", "5-7模組", "多模組"].map((g, i) => (
          <GroupItem key={g} $on={i === 0}>
            <Mixed text={g} />
          </GroupItem>
        ))}
      </Groups>
      <DialogMain>
        <TopLine>
          <BlankCard>
            <Icon w={24} h={22}>
              <path d="M0.500 0.500H23.500V21.500H0.500Z" strokeDasharray="3 2" strokeWidth="1" />
              <path d="M7 11.500H17M12.500 6V16" strokeWidth="1" />
            </Icon>
            新建空白範本
            <Frame $inset="0" />
            <Badge $x={269} $y={45}>3</Badge>
          </BlankCard>
          <Toggle>
            <ToggleButton $on>簡約查看</ToggleButton>
            <ToggleButton>真實查看</ToggleButton>
          </Toggle>
        </TopLine>
        <GroupBox>
          <BoxLegend>選擇範本</BoxLegend>
          <Scroller>
            <Sections>
              <Thumbs name="2-4模組" items={small} />
              <Thumbs name="5-7模組" items={large} />
            </Sections>
            <VScroll><VThumb /></VScroll>
          </Scroller>
          <HScroll><HScrollThumb /></HScroll>
        </GroupBox>
      </DialogMain>
    </DialogBody>
    <Actions>
      <Action disabled>
        確定
        <Frame $inset="-1px -1px -5px 1px" />
        <Badge $x={-55} $y={-12}>4</Badge>
      </Action>
      <Action>取消</Action>
    </Actions>
  </Dialog>
);

/* ---------- page ---------- */

export default function App() {
  return (
    <Page>
      <Global />
      <Window>
        <TitleBar>
          <Logo size={17} />
          <Title>FineReport 11.0.5 stable 2022-06-15 @</Title>
          <Masked />
          <Spacer />
          <WindowButton aria-label="minimize"><Icon size={12} color="#000"><path d="M0 5.500H12" strokeWidth="1" /></Icon></WindowButton>
          <WindowButton aria-label="maximize"><Icon size={12} color="#000"><path d="M0.500 0.500H11.500V11.500H0.500Z" strokeWidth="1" /></Icon></WindowButton>
          <WindowButton aria-label="close window"><Cross /></WindowButton>
        </TitleBar>
        <MenuBar>
          <MenuTitle>
            檔案
            <Frame $inset="-1px 3px -3px -6px" />
            <Badge $x={-47} $y={-7}>1</Badge>
          </MenuTitle>
          {["範本", "插入", "儲存格(C)", "伺服器", "說明", "社區"].map((m) => (
            <MenuTitle key={m}><Mixed text={m} /></MenuTitle>
          ))}
          <LogLine>
            <Mixed text={'日誌 | 正常:09:27:58 AWT-EventQueue-0 INFO [standard] "WorkBook18"已經打開!'} />
          </LogLine>
          <Spacer />
          <Tools>
            <PlainButton aria-label="search"><Lens /></PlainButton>
            <PlainButton aria-label="notes"><NotePen /></PlainButton>
            <PlainButton aria-label="alerts"><Bell /></PlainButton>
          </Tools>
          <User><Mixed text="是mika啊" /></User>
          <FileMenu />
        </MenuBar>
        <Body>
          <Left />
          <Gutter><Caret dir="left" size={10} color="#9c9c9f" /></Gutter>
          <Middle />
          <Right />
        </Body>
        <NewTemplate />
      </Window>
    </Page>
  );
}
